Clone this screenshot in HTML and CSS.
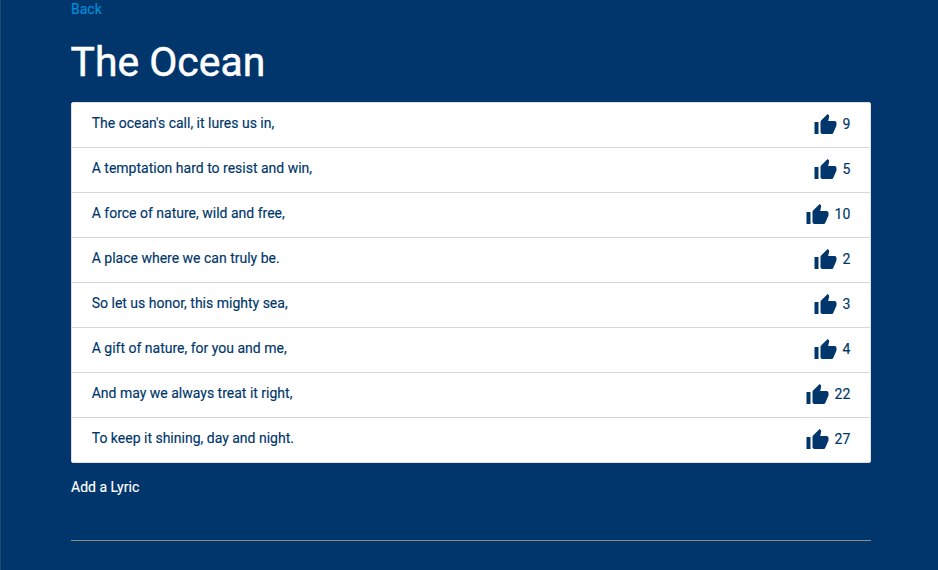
FILE: index.html
```html
<!DOCTYPE html>
<html lang="en">
<head>
<meta charset="utf-8">
<title>The Ocean</title>
<link rel="stylesheet" href="styles.css">
</head>
<body>
<svg class="sprite" aria-hidden="true"><symbol id="thumb" viewBox="0.5 0 24 24"><path d="M1 21h4V9H1v12zm22-11c0-1.100-.9-2-2-2h-6.310l.95-4.570.03-.32c0-.41-.17-.79-.44-1.060L14.170 1 7.590 7.590C7.220 7.950 7 8.450 7 9v10c0 1.100.9 2 2 2h9c.83 0 1.540-.5 1.840-1.220l3.020-7.050c.09-.23.14-.47.14-.73v-2z"/></symbol></svg>
<main class="container">
<a class="back">Back</a>
<h3>The Ocean</h3>
<ul class="collection">
<li><span>The ocean's call, it lures us in,</span><div class="votes"><svg><use href="#thumb"/></svg>9</div></li>
<li><span>A temptation hard to resist and win,</span><div class="votes"><svg><use href="#thumb"/></svg>5</div></li>
<li><span>A force of nature, wild and free,</span><div class="votes"><svg><use href="#thumb"/></svg>10</div></li>
<li><span>A place where we can truly be.</span><div class="votes"><svg><use href="#thumb"/></svg>2</div></li>
<li><span>So let us honor, this mighty sea,</span><div class="votes"><svg><use href="#thumb"/></svg>3</div></li>
<li><span>A gift of nature, for you and me,</span><div class="votes"><svg><use href="#thumb"/></svg>4</div></li>
<li><span>And may we always treat it right,</span><div class="votes"><svg><use href="#thumb"/></svg>22</div></li>
<li><span>To keep it shining, day and night.</span><div class="votes"><svg><use href="#thumb"/></svg>27</div></li>
</ul>
<label class="add" for="lyric">Add a Lyric</label>
<input id="lyric" type="text">
</main>
</body>
</html>
```

FILE: styles.css
```css
* { box-sizing: border-box; }
body { margin: 0; height: 570px; overflow: hidden; background: #00366b; border-left: 1px solid #1b4a79; font: 14px/21px Roboto, sans-serif; color: #fff; -webkit-text-stroke: 0.15px; }
.sprite { display: none; }
.container { width: 800px; margin-left: 70px; }
.back { display: block; height: 38px; line-height: 18px; color: #038cd8; }
h3 { margin: 0 0 16px -0.5px; padding-top: 1px; font-size: 40.880px; line-height: 47px; font-weight: 400; -webkit-text-stroke: 0.5px; }
.collection { margin: 0; padding: 0; list-style: none; background: #fff; color: #00366b; border: 1px solid #e0e0e0; border-radius: 2px; overflow: hidden; }
li { display: flex; justify-content: space-between; height: 45px; padding: 10px 20px; border-bottom: 1px solid #d3d6da; }
li span { margin-left: -0.3px; }
li:last-child { height: 44px; border: 0; }
.votes { display: flex; height: 24px; line-height: 23px; margin-right: -0.3px; }
.votes svg { width: 24px; height: 24px; margin-right: 4.900px; fill: #00366b; stroke: none; }
.add { display: block; margin-top: 14px; }
input { display: block; width: 100%; height: 43px; padding: 0; border: 0; border-bottom: 1px solid #8f8b89; background: transparent; color: #fff; outline: 0; }
```
